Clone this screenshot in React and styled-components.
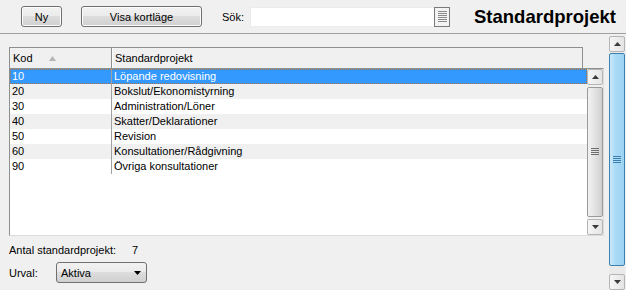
import React from 'react';
import styled, { createGlobalStyle } from 'styled-components';

const GlobalStyle = createGlobalStyle`
  html, body {
    margin: 0;
    padding: 0;
    background: #f0f0f0;
    overflow: hidden;
  }
  body {
    font-family: "Liberation Sans", Arial, sans-serif;
    font-size: 11px;
    color: #000;
  }
`;

const Window = styled.div`
  width: 626px;
  height: 290px;
  display: flex;
  flex-direction: column;
`;

const Toolbar = styled.div`
  height: 33px;
  flex: none;
  display: flex;
  align-items: center;
  padding-left: 21px;
  border-bottom: 1px solid #a0a0a0;
`;

const Button = styled.button`
  width: ${p => p.$w}px;
  height: 21px;
  margin-right: ${p => p.$gap}px;
  padding: 0;
  border: 1px solid #707070;
  border-radius: 3px;
  background: linear-gradient(#f2f2f2 0%, #ebebeb 45%, #dddddd 50%, #cfcfcf 100%);
  box-shadow: inset 0 0 0 1px #fcfcfc;
  font-family: inherit;
  font-size: 11px;
  color: #000;
`;

const Label = styled.span`
  margin-right: 6px;
`;

const Search = styled.div`
  display: flex;
  align-items: stretch;
  height: 20px;
  margin-right: 24px;
`;

const SearchInput = styled.div`
  width: 183px;
  background: #fff;
  border: 1px solid #ececec;
  border-right: none;
`;

const SearchIcon = styled.div`
  width: 14px;
  border: 1px solid #7a7a7a;
  background: #f3f3f3;
  display: flex;
  align-items: center;
  justify-content: center;
`;

const Title = styled.h1`
  margin: 0;
  font-size: 18.5px;
  font-weight: bold;
  font-family: "Liberation Sans", Arial, sans-serif;
`;

const Main = styled.div`
  flex: 1;
  display: flex;
  padding-top: 1px;
  min-height: 0;
`;

const Content = styled.div`
  flex: 1;
  display: flex;
  flex-direction: column;
  padding: 12px 5px 0 9px;
`;

const Grid = styled.div`
  display: flex;
  flex-direction: column;
  width: 595px;
`;

const HeaderRow = styled.div`
  display: flex;
  width: 574px;
  height: 21px;
  box-sizing: border-box;
  border: 1px solid #8e8f8f;
  border-bottom: none;
  background: #f0f0f0;
`;

const HeaderCell = styled.div`
  box-sizing: border-box;
  width: ${p => (p.$w ? `${p.$w}px` : 'auto')};
  flex: ${p => (p.$w ? 'none' : 1)};
  display: flex;
  align-items: center;
  gap: 16px;
  padding-left: 3px;
  border-right: ${p => (p.$w ? '1px solid #8e8f8f' : 'none')};
  box-shadow: ${p => (p.$w ? '1px 0 0 #fff' : 'none')};
`;

const GridBody = styled.div`
  display: flex;
  height: 168px;
  box-sizing: border-box;
  border-top: 1px solid #8e8f8f;
  border-left: 1px solid #8e8f8f;
  border-right: 1px solid #dcdcdc;
  border-bottom: 1px solid #dcdcdc;
  background: #fff;
`;

const Rows = styled.div`
  flex: 1;
`;

const Row = styled.div`
  display: flex;
  height: 15px;
  box-sizing: border-box;
  background: ${p => (p.$selected ? '#3399ff' : p.$alt ? '#f0f0f0' : '#fff')};
  color: ${p => (p.$selected ? '#fff' : '#000')};
  outline: ${p => (p.$selected ? '1px dotted #b07040' : 'none')};
  outline-offset: -1px;
`;

const Cell = styled.div`
  width: ${p => (p.$w ? `${p.$w}px` : 'auto')};
  flex: ${p => (p.$w ? 'none' : 1)};
  box-sizing: border-box;
  padding-left: 2px;
  line-height: 15px;
  white-space: nowrap;
  border-right: ${p => (p.$w ? '1px solid #a0a0a0' : 'none')};
`;

const VScroll = styled.div`
  width: 16px;
  flex: none;
  display: flex;
  flex-direction: column;
  background: ${p => (p.$outer ? '#eaeaea' : '#f0f0f0')};
  margin: ${p => (p.$outer ? '1px 1px 0 0' : '0')};
`;

const ArrowButton = styled.div`
  height: 16px;
  flex: none;
  box-sizing: border-box;
  border: 1px solid #b5b5b5;
  border-radius: 2px;
  background: linear-gradient(to right, #f6f6f6, #e4e4e4);
  display: flex;
  align-items: center;
  justify-content: center;
`;

const Track = styled.div`
  flex: 1;
  display: flex;
  flex-direction: column;
  padding: ${p => p.$pad};
`;

const Thumb = styled.div`
  flex: 1;
  box-sizing: border-box;
  border: 1px solid ${p => (p.$blue ? '#3c7fb1' : '#9a9a9a')};
  border-radius: 2px;
  background: ${p =>
    p.$blue
      ? 'linear-gradient(to right, #cbe8f8, #a9daf6 40%, #9ed3f3 100%)'
      : 'linear-gradient(to right, #f2f2f2, #e2e2e2 50%, #cfcfcf)'};
  display: flex;
  align-items: center;
  justify-content: center;
`;

const Footer = styled.div`
  display: flex;
  flex-direction: column;
  padding-top: 7px;
`;

const InfoLine = styled.div`
  display: flex;
  align-items: center;
  height: 14px;
`;

const InfoLabel = styled.span`
  width: ${p => p.$w}px;
`;

const SelectRow = styled.div`
  display: flex;
  align-items: center;
  margin-top: 5px;
`;

const Select = styled.div`
  width: 91px;
  height: 21px;
  box-sizing: border-box;
  border: 1px solid #707070;
  border-radius: 3px;
  background: linear-gradient(#f2f2f2 0%, #ebebeb 45%, #dddddd 50%, #cfcfcf 100%);
  display: flex;
  align-items: center;
  justify-content: space-between;
  padding: 0 5px 0 4px;
`;

const UpArrow = () => (
  <svg width="7" height="4" viewBox="0 0 7 4">
    <path d="M0 4 L3.5 0 L7 4 Z" fill="#3a3a3a" />
  </svg>
);

const DownArrow = ({ color = '#3a3a3a' }) => (
  <svg width="7" height="4" viewBox="0 0 7 4">
    <path d="M0 0 L7 0 L3.5 4 Z" fill={color} />
  </svg>
);

const Grip = ({ color }) => (
  <svg width="8" height="8" viewBox="0 0 8 8">
    {[0, 2, 4, 6].map(y => (
      <rect key={y} x="0" y={y} width="8" height="1" fill={color} />
    ))}
  </svg>
);

const NoteIcon = () => (
  <svg width="9" height="12" viewBox="0 0 9 12">
    {[1, 3, 5, 7, 9, 11].map(y => (
      <rect key={y} x="0" y={y - 1} width="9" height="1" fill="#8a8a8a" />
    ))}
  </svg>
);

const SortArrow = () => (
  <svg width="7" height="5" viewBox="0 0 7 5">
    <path d="M0 5 L3.5 0 L7 5 Z" fill="#b4b4b4" />
  </svg>
);

const projects = [
  ['10', 'Löpande redovisning'],
  ['20', 'Bokslut/Ekonomistyrning'],
  ['30', 'Administration/Löner'],
  ['40', 'Skatter/Deklarationer'],
  ['50', 'Revision'],
  ['60', 'Konsultationer/Rådgivning'],
  ['90', 'Övriga konsultationer'],
];

function Scrollbar({ outer }) {
  return (
    <VScroll $outer={outer}>
      <ArrowButton><UpArrow /></ArrowButton>
      <Track $pad={outer ? '1px 0 8px' : '2px 0 2px'}>
        <Thumb $blue={outer}>
          <Grip color={outer ? '#3c7fb1' : '#6e6e6e'} />
        </Thumb>
      </Track>
      <ArrowButton><DownArrow /></ArrowButton>
    </VScroll>
  );
}

export default function App() {
  return (
    <Window>
      <GlobalStyle />
      <Toolbar>
        <Button $w={41} $gap={19}>Ny</Button>
        <Button $w={121} $gap={20}>Visa kortläge</Button>
        <Label>Sök:</Label>
        <Search>
          <SearchInput />
          <SearchIcon><NoteIcon /></SearchIcon>
        </Search>
        <Title>Standardprojekt</Title>
      </Toolbar>
      <Main>
        <Content>
          <Grid>
            <HeaderRow>
              <HeaderCell $w={102}>
                Kod <SortArrow />
              </HeaderCell>
              <HeaderCell>Standardprojekt</HeaderCell>
            </HeaderRow>
            <GridBody>
              <Rows>
                {projects.map(([kod, name], i) => (
                  <Row key={kod} $selected={i === 0} $alt={i % 2 === 1}>
                    <Cell $w={102}>{kod}</Cell>
                    <Cell>{name}</Cell>
                  </Row>
                ))}
              </Rows>
              <Scrollbar />
            </GridBody>
          </Grid>
          <Footer>
            <InfoLine>
              <InfoLabel $w={123}>Antal standardprojekt:</InfoLabel>
              <span>7</span>
            </InfoLine>
            <SelectRow>
              <InfoLabel $w={47}>Urval:</InfoLabel>
              <Select>
                <span>Aktiva</span>
                <DownArrow color="#000" />
              </Select>
            </SelectRow>
          </Footer>
        </Content>
        <Scrollbar outer />
      </Main>
    </Window>
  );
}
